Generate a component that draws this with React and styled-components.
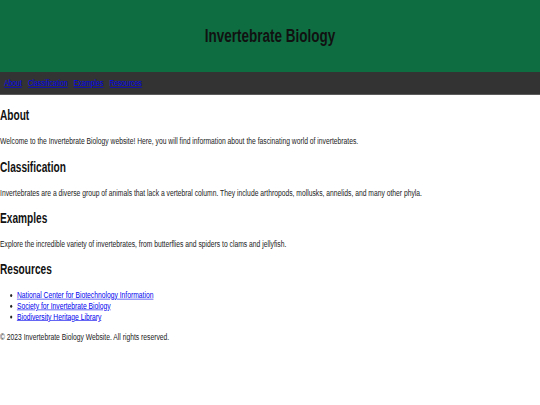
import React from "react";
import styled, { createGlobalStyle } from "styled-components";

const Global = createGlobalStyle`
  html, body { margin: 0; padding: 0; background: #fff; overflow: hidden; }
  body { font-family: "Liberation Sans", Arial, sans-serif; }
`;

const Frame = styled.div`
  width: 540px;
  height: 405px;
  overflow: hidden;
`;

const Viewport = styled.div`
  width: 1280px;
  height: 675px;
  transform: scale(0.421875, 0.6);
  transform-origin: 0 0;
  font-family: "Liberation Sans", Arial, sans-serif;
  font-size: 16px;
  color: #222;
`;

const Header = styled.header`
  background: #0e6e41;
  padding: 20px 0;
  text-align: center;
`;

const Title = styled.h1`
  margin: 21.44px 0;
  font-size: 32px;
  font-weight: bold;
  color: #111;
`;

const Nav = styled.nav`
  background: #333;
  padding: 10px;
  display: flex;
  gap: 14.5px;
`;

const NavLink = styled.a`
  color: #0000ee;
  text-decoration: underline;
  font-size: 16px;
`;

const Main = styled.main`
  padding: 0;
`;

const Section = styled.section``;

const Heading = styled.h2`
  font-size: 24px;
  font-weight: bold;
  color: #111;
  margin: 19.92px 0;
`;

const Text = styled.p`
  margin: 16px 0;
`;

const List = styled.ul`
  margin: 16px 0;
  padding-left: 40px;
`;

const ItemLink = styled.a`
  color: #0000ee;
  text-decoration: underline;
`;

const Footer = styled.footer``;

const sections = [
  {
    title: "About",
    text: "Welcome to the Invertebrate Biology website! Here, you will find information about the fascinating world of invertebrates.",
  },
  {
    title: "Classification",
    text: "Invertebrates are a diverse group of animals that lack a vertebral column. They include arthropods, mollusks, annelids, and many other phyla.",
  },
  {
    title: "Examples",
    text: "Explore the incredible variety of invertebrates, from butterflies and spiders to clams and jellyfish.",
  },
];

const resources = [
  "National Center for Biotechnology Information",
  "Society for Invertebrate Biology",
  "Biodiversity Heritage Library",
];

export default function App() {
  return (
    <>
      <Global />
      <Frame>
        <Viewport>
          <Header>
            <Title>Invertebrate Biology</Title>
          </Header>
          <Nav>
            {["About", "Classification", "Examples", "Resources"].map((l) => (
              <NavLink key={l} href={`#${l.toLowerCase()}`}>
                {l}
              </NavLink>
            ))}
          </Nav>
          <Main>
            {sections.map((s) => (
              <Section key={s.title} id={s.title.toLowerCase()}>
                <Heading>{s.title}</Heading>
                <Text>{s.text}</Text>
              </Section>
            ))}
            <Section id="resources">
              <Heading>Resources</Heading>
              <List>
                {resources.map((r) => (
                  <li key={r}>
                    <ItemLink href="#">{r}</ItemLink>
                  </li>
                ))}
              </List>
            </Section>
          </Main>
          <Footer>
            <Text>© 2023 Invertebrate Biology Website. All rights reserved.</Text>
          </Footer>
        </Viewport>
      </Frame>
    </>
  );
}
